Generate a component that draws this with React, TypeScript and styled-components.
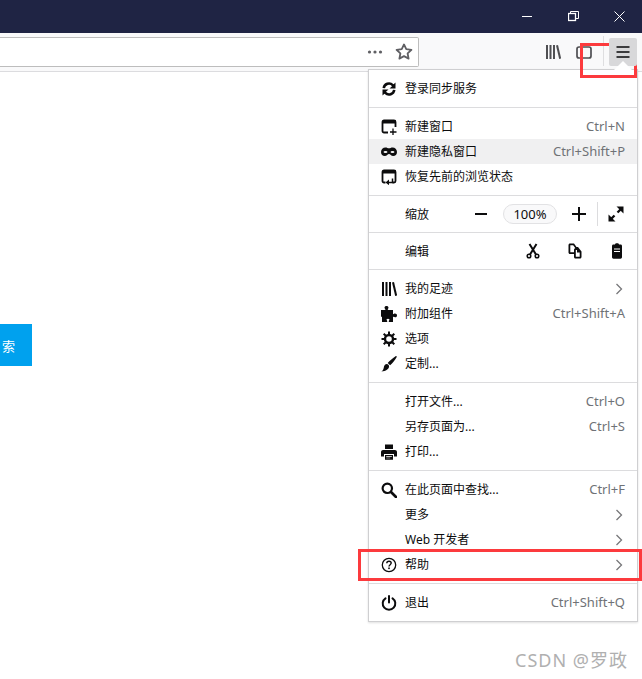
import React from 'react';
import styled, { createGlobalStyle } from 'styled-components';

const GlobalStyle = createGlobalStyle`
    html, body {
        margin: 0;
        padding: 0;
        background: #fff;
    }
    body {
        font-family: 'Noto Sans', 'Noto Sans CJK SC', sans-serif;
    }
`;

const Page = styled.div`
    position: relative;
    width: 642px;
    height: 679px;
    overflow: hidden;
    background: #fff;
`;

const TitleBar = styled.div`
    height: 33px;
    background: #1f2444;
    display: flex;
    justify-content: flex-end;
    align-items: center;
`;

const WindowButton = styled.div`
    width: 46px;
    height: 33px;
    display: flex;
    align-items: center;
    justify-content: center;
    color: #fff;
`;

const Toolbar = styled.div`
    height: 38px;
    background: #f9f9fa;
    border-bottom: 1px solid #dcdcdf;
    display: flex;
    align-items: flex-start;
`;

const AddressBar = styled.div`
    width: 419px;
    height: 30px;
    margin-top: 4px;
    box-sizing: border-box;
    background: #fff;
    border: 1px solid #bdbdbd;
    border-left: none;
    border-radius: 0 2px 2px 0;
    display: flex;
    justify-content: flex-end;
    align-items: center;
    gap: 12px;
    padding-right: 5px;
    color: #5f5f63;
`;

const ToolButtons = styled.div`
    flex: 1;
    display: flex;
    align-items: flex-start;
    padding-left: 126px;
    color: #4f4f52;
`;

const ToolIcon = styled.div<{ $gap: number }>`
    width: 16px;
    height: 16px;
    margin-top: 11px;
    margin-right: ${(p) => p.$gap}px;
`;

const ToolDivider = styled.div`
    width: 1px;
    height: 30px;
    margin-top: 3px;
    background: #dedee0;
`;

const MenuToggle = styled.div`
    position: relative;
    z-index: 2;
    width: 28px;
    height: 28px;
    margin-top: 5px;
    margin-left: 5px;
    border-radius: 2px;
    background: #d8d8da;
    display: flex;
    align-items: center;
    justify-content: center;
    color: #3c3c3e;
`;

const PageBody = styled.div`
    padding-top: 252px;
`;

const SearchButton = styled.div`
    width: 32px;
    height: 42px;
    background: #00a1ee;
    color: #fff;
    font-size: 13px;
    display: flex;
    align-items: center;
    padding-left: 2px;
    box-sizing: border-box;
`;

const Menu = styled.div`
    position: absolute;
    left: 368px;
    top: 69px;
    width: 270px;
    box-sizing: border-box;
    background: #fff;
    border: 1px solid #cfcfd1;
    box-shadow: 0 1px 2px rgba(0, 0, 0, 0.12);
    color: #0c0c0d;
    font-size: 12px;
`;

const MenuArrow = styled.div`
    position: absolute;
    z-index: 3;
    right: 5px;
    top: -9px;
    width: 0;
    height: 0;
    border-left: 9px solid transparent;
    border-right: 9px solid transparent;
    border-bottom: 9px solid #fff;
`;

const Section = styled.div<{ $bare?: boolean; $first?: boolean }>`
    padding: ${(p) => (p.$bare ? '0' : '6px 0')};
    border-top: ${(p) => (p.$first ? 'none' : '1px solid #dcdcde')};
`;

const Row = styled.div<{ $active?: boolean }>`
    height: 25px;
    display: flex;
    align-items: center;
    padding: 0 12px;
    background: ${(p) => (p.$active ? '#f0f0f1' : 'transparent')};
`;

const IconSlot = styled.div`
    width: 16px;
    height: 16px;
    margin-right: 8px;
    flex: none;
    color: #0c0c0d;
`;

const Label = styled.span`
    flex: 1;
    padding-bottom: 2px;
    white-space: nowrap;
`;

const Shortcut = styled.span`
    color: #6f7276;
    font-size: 13px;
    padding-bottom: 2px;
    white-space: nowrap;
`;

const Chevron = styled.div`
    width: 16px;
    height: 16px;
    color: #77777a;
    margin-right: -2px;
`;

const ControlRow = styled.div`
    height: 36px;
    display: flex;
    align-items: center;
    padding-left: 36px;
`;

const ControlLabel = styled.span<{ $width: number }>`
    width: ${(p) => p.$width}px;
`;

const ControlIcon = styled.div<{ $gap?: number }>`
    width: 16px;
    height: 16px;
    margin-right: ${(p) => p.$gap ?? 0}px;
    color: #0c0c0d;
`;

const ZoomValue = styled.div`
    width: 54px;
    height: 20px;
    margin: 0 14px;
    box-sizing: border-box;
    border: 1px solid #e2e2e4;
    border-radius: 10px;
    background: #f9f9fa;
    display: flex;
    align-items: center;
    justify-content: center;
    font-size: 13px;
`;

const ZoomDivider = styled.div`
    width: 1px;
    height: 24px;
    margin: 0 10px;
    background: #dcdcde;
`;

const Annotation = styled.div<{ $x: number; $y: number; $w: number; $h: number }>`
    position: absolute;
    z-index: 1;
    left: ${(p) => p.$x}px;
    top: ${(p) => p.$y}px;
    width: ${(p) => p.$w}px;
    height: ${(p) => p.$h}px;
    box-sizing: border-box;
    border: 3px solid #fc3a3d;
`;

const Watermark = styled.div`
    position: absolute;
    right: 14px;
    bottom: 7px;
    font-size: 18px;
    line-height: 24px;
    letter-spacing: 1px;
    color: #b0b0b0;
`;

const Svg = ({ children, size = 16 }: { children: React.ReactNode; size?: number }) => (
    <svg width={size} height={size} viewBox="0 0 16 16" fill="currentColor" style={{ display: 'block' }}>
        {children}
    </svg>
);

const line = { fill: 'none', stroke: 'currentColor', strokeWidth: 2 };

const icons: Record<string, React.ReactNode> = {
    sync: (
        <>
            <path d="M1.5 7A6.500 6.500 0 0 1 12.600 3.200L14.500 1.500V7.500H8.500L11 5.200A4 4 0 0 0 4 7.200z" />
            <path d="M14.500 9A6.500 6.500 0 0 1 3.400 12.800L1.500 14.500V8.500H7.500L5 10.800A4 4 0 0 0 12 8.800z" />
        </>
    ),
    newWindow: (
        <>
            <path d="M7 13.500H3A1.500 1.500 0 0 1 1.500 12V3A1.500 1.500 0 0 1 3 1.500h10A1.500 1.500 0 0 1 14.500 3V8" {...line} strokeWidth={1.8} />
            <rect x="1" y="1.500" width="14" height="3" rx="1" />
            <path d="M12 9.500v6.500M9 13h6.500" {...line} strokeWidth={1.3} />
        </>
    ),
    mask: (
        <path
            fillRule="evenodd"
            d="M4.500 3.500C2 3.500 0 5.500 0 8s1.600 4 3.800 4c2.200 0 2.800-2 4.200-2s2 2 4.200 2C14.400 12 16 10.500 16 8s-2-4.500-4.500-4.500c-1.500 0-2.300.8-3.500.8s-2-.8-3.500-.8zM4.500 7c1 0 1.900.4 1.900 1s-.9 1-1.900 1-1.900-.4-1.900-1 .9-1 1.900-1zm7 0c1 0 1.900.4 1.900 1s-.9 1-1.900 1-1.900-.4-1.900-1 .9-1 1.900-1z"
        />
    ),
    restore: (
        <>
            <path d="M4.500 13.500H3A1.500 1.500 0 0 1 1.500 12V3A1.500 1.500 0 0 1 3 1.500h10A1.500 1.500 0 0 1 14.500 3V12a1.500 1.500 0 0 1-1.500 1.500h-1.500" {...line} strokeWidth={1.8} />
            <rect x="1" y="1.500" width="14" height="3" rx="1" />
            <path d="M11.500 9.500v4H7" {...line} strokeWidth={1.5} />
            <path d="M8 10.500l-3.500 3L8 16.200z" />
        </>
    ),
    library: (
        <>
            <rect x="1" y="1" width="2" height="14" />
            <rect x="4.500" y="1" width="2" height="14" />
            <rect x="8" y="1" width="2" height="14" />
            <path d="M11 1.500l2-.5L16.200 14.500l-2 .5z" />
        </>
    ),
    puzzle: (
        <path d="M0 4h3.600c.6 0 .8-.4.5-.9C3.700 2.500 3.500 2.100 3.500 1.700 3.500.7 4.400 0 5.500 0s2 .7 2 1.700c0 .4-.2.8-.6 1.400-.3.5-.1.9.5.9H12v3.600c0 .5.4.7.8.4.4-.4.8-.5 1.200-.5 1.100 0 2 .7 2 1.900s-.9 1.900-2 1.900c-.4 0-.8-.2-1.200-.5-.4-.3-.8-.1-.8.4V16H7.800v-.8c0-.6.3-.9.6-1.200.3-.4-.2-1.200-1.400-1.200s-1.700.8-1.400 1.200c.3.300.6.6.6 1.200v.8H1v-4.800c0-.5-.3-.8-.6-.5l-.4.300z" />
    ),
    gear: (
        <>
            <circle cx="8" cy="8" r="4" {...line} strokeWidth={2.4} />
            <path d="M8 0.500V3.500M8 12.500V15.500M0.500 8H3.500M12.500 8H15.500M2.700 2.700L4.800 4.800M11.200 11.200L13.300 13.300M13.300 2.700L11.200 4.800M4.800 11.200L2.700 13.300" {...line} />
        </>
    ),
    brush: (
        <>
            <path d="M15.500.3c.3.300.3.700.1 1-1.700 2.800-4.400 6.200-6.500 8L6.700 7.100C8.500 5 12 2.100 14.600.3c.3-.2.600-.3.900 0z" />
            <path d="M5.800 8c1.200 0 2.300 1 2.300 2.300C8.100 13 5 15.500.3 15.500c1.200-.8 2-1.700 2.400-3.600C3 9.500 4.200 8 5.800 8z" />
        </>
    ),
    printer: (
        <path
            fillRule="evenodd"
            d="M4 .5h8v4.500H4zM2 6h12c1 0 2 .8 2 2v4.500h-3V10H3v2.500H0V8c0-1.200 1-2 2-2zM4 11h8v4.800H4zm1.200 1.200v.8h5.600v-.8zm0 1.500v.6h4v-.6z"
        />
    ),
    search: (
        <>
            <circle cx="6.300" cy="6.300" r="4.700" {...line} strokeWidth={2.2} />
            <path d="M10 10l5 5" {...line} strokeWidth={2.6} strokeLinecap="round" />
        </>
    ),
    help: (
        <>
            <circle cx="8" cy="8" r="6.700" {...line} strokeWidth={1.3} />
            <path d="M5.800 6.200C5.800 5 6.800 4.300 8 4.300s2.200.7 2.200 1.800c0 1.600-2.200 1.600-2.200 3.400" {...line} strokeWidth={1.4} />
            <rect x="7.200" y="10.500" width="1.600" height="1.600" />
        </>
    ),
    power: (
        <>
            <path d="M4.500 3.300a6.300 6.300 0 1 0 7 0" {...line} strokeLinecap="round" />
            <path d="M8 1v6.500" {...line} strokeLinecap="round" />
        </>
    ),
    scissors: (
        <>
            <circle cx="4" cy="13" r="1.800" {...line} strokeWidth={1.5} />
            <circle cx="12" cy="13" r="1.800" {...line} strokeWidth={1.5} />
            <path d="M5 11.500L11.500 1M11 11.500L4.500 1" {...line} />
        </>
    ),
    copy: (
        <path
            fillRule="evenodd"
            d="M3 .5h4l2.500 3.500H11l3.500 4.500V14c0 .8-.7 1.500-1.500 1.500H8.500C7.700 15.500 7 14.800 7 14v-3H3c-.8 0-1.500-.7-1.500-1.500V2C1.500 1.200 2.200.5 3 .5zM3.300 2.300v6.900H7V7c0-1 .7-2 1.500-2h-.3L6.200 2.300zM8.800 7v6.700h3.900V9.500H10V7z"
        />
    ),
    paste: (
        <path
            fillRule="evenodd"
            d="M6 1.500C6 .8 6.800.3 8 .3s2 .5 2 1.200h1.500c1 0 1.500.7 1.500 1.500v11c0 1-.7 1.700-1.500 1.700h-7C3.700 15.700 3 15 3 14V3c0-.8.5-1.500 1.500-1.500zM5 5.500v1h6v-1zM5 8v1h6V8z"
        />
    ),
    expand: (
        <>
            <path d="M9.500 6.500L13.500 2.500M6.500 9.500L2.500 13.500" {...line} strokeWidth={2.3} />
            <path d="M8.500.5h7v7l-2.300-2.300-2.400-2.400zM7.500 15.500h-7v-7l2.300 2.300 2.400 2.400z" />
        </>
    ),
    minus: <rect x="2" y="7" width="12" height="2" />,
    plus: <path d="M7 1h2v6h6v2H9v6H7V9H1V7h6z" />,
    chevron: <path d="M5.500 3L10.500 8 5.500 13" fill="none" stroke="currentColor" strokeWidth={1.3} />,
    star: (
        <path
            d="M8 1.300l2 4.200 4.600.6-3.400 3.200.9 4.600L8 11.700l-4.100 2.200.9-4.600-3.400-3.200 4.600-.6z"
            fill="none"
            stroke="currentColor"
            strokeWidth={1.6}
            strokeLinejoin="round"
        />
    ),
    dots: (
        <>
            <circle cx="2.500" cy="8" r="1.600" />
            <circle cx="8" cy="8" r="1.600" />
            <circle cx="13.500" cy="8" r="1.600" />
        </>
    ),
    sidebar: (
        <>
            <rect x="1" y="3" width="14" height="11" rx="2" {...line} strokeWidth={1.7} />
            <rect x="5" y="3" width="1.500" height="11" />
        </>
    ),
    hamburger: (
        <>
            <rect x="1.500" y="2" width="13" height="2" />
            <rect x="1.500" y="7" width="13" height="2" />
            <rect x="1.500" y="12" width="13" height="2" />
        </>
    ),
};

type Item = {
    label: string;
    icon?: string;
    shortcut?: string;
    more?: boolean;
    active?: boolean;
};

const MenuRow = ({ item }: { item: Item }) => (
    <Row $active={item.active}>
        <IconSlot>{item.icon && <Svg>{icons[item.icon]}</Svg>}</IconSlot>
        <Label>{item.label}</Label>
        {item.shortcut && <Shortcut>{item.shortcut}</Shortcut>}
        {item.more && (
            <Chevron>
                <Svg>{icons.chevron}</Svg>
            </Chevron>
        )}
    </Row>
);

const App = () => (
    <Page>
        <GlobalStyle />
        <TitleBar>
            <WindowButton>
                <svg width="11" height="11" viewBox="0 0 11 11" stroke="currentColor" fill="none">
                    <path d="M0 5.500h10" />
                </svg>
            </WindowButton>
            <WindowButton>
                <svg width="11" height="11" viewBox="0 0 11 11" stroke="currentColor" fill="none">
                    <rect x="0.500" y="2.500" width="7" height="7" strokeWidth={1.3} />
                    <path d="M2.500 2.500V.5h8v7H8" />
                </svg>
            </WindowButton>
            <WindowButton>
                <svg width="11" height="11" viewBox="0 0 11 11" stroke="currentColor" fill="none">
                    <path d="M.5.500l10 10M10.500.500l-10 10" />
                </svg>
            </WindowButton>
        </TitleBar>
        <Toolbar>
            <AddressBar>
                <Svg>{icons.dots}</Svg>
                <Svg size={18}>{icons.star}</Svg>
            </AddressBar>
            <ToolButtons>
                <ToolIcon $gap={15}>
                    <Svg>{icons.library}</Svg>
                </ToolIcon>
                <ToolIcon $gap={11}>
                    <Svg>{icons.sidebar}</Svg>
                </ToolIcon>
                <ToolDivider />
                <MenuToggle>
                    <Svg>{icons.hamburger}</Svg>
                </MenuToggle>
            </ToolButtons>
        </Toolbar>
        <PageBody>
            <SearchButton>索</SearchButton>
        </PageBody>

        <Menu>
            <MenuArrow />
            <Section $first>
                <MenuRow item={{ label: '登录同步服务', icon: 'sync' }} />
            </Section>
            <Section>
                <MenuRow item={{ label: '新建窗口', icon: 'newWindow', shortcut: 'Ctrl+N' }} />
                <MenuRow item={{ label: '新建隐私窗口', icon: 'mask', shortcut: 'Ctrl+Shift+P', active: true }} />
                <MenuRow item={{ label: '恢复先前的浏览状态', icon: 'restore' }} />
            </Section>
            <Section $bare>
                <ControlRow>
                    <ControlLabel $width={68}>缩放</ControlLabel>
                    <ControlIcon>
                        <Svg>{icons.minus}</Svg>
                    </ControlIcon>
                    <ZoomValue>100%</ZoomValue>
                    <ControlIcon>
                        <Svg>{icons.plus}</Svg>
                    </ControlIcon>
                    <ZoomDivider />
                    <ControlIcon>
                        <Svg>{icons.expand}</Svg>
                    </ControlIcon>
                </ControlRow>
            </Section>
            <Section $bare>
                <ControlRow>
                    <ControlLabel $width={120}>编辑</ControlLabel>
                    <ControlIcon $gap={26}>
                        <Svg>{icons.scissors}</Svg>
                    </ControlIcon>
                    <ControlIcon $gap={26}>
                        <Svg>{icons.copy}</Svg>
                    </ControlIcon>
                    <ControlIcon>
                        <Svg>{icons.paste}</Svg>
                    </ControlIcon>
                </ControlRow>
            </Section>
            <Section>
                <MenuRow item={{ label: '我的足迹', icon: 'library', more: true }} />
                <MenuRow item={{ label: '附加组件', icon: 'puzzle', shortcut: 'Ctrl+Shift+A' }} />
                <MenuRow item={{ label: '选项', icon: 'gear' }} />
                <MenuRow item={{ label: '定制...', icon: 'brush' }} />
            </Section>
            <Section>
                <MenuRow item={{ label: '打开文件...', shortcut: 'Ctrl+O' }} />
                <MenuRow item={{ label: '另存页面为...', shortcut: 'Ctrl+S' }} />
                <MenuRow item={{ label: '打印...', icon: 'printer' }} />
            </Section>
            <Section>
                <MenuRow item={{ label: '在此页面中查找...', icon: 'search', shortcut: 'Ctrl+F' }} />
                <MenuRow item={{ label: '更多', more: true }} />
                <MenuRow item={{ label: 'Web 开发者', more: true }} />
                <MenuRow item={{ label: '帮助', icon: 'help', more: true }} />
            </Section>
            <Section>
                <MenuRow item={{ label: '退出', icon: 'power', shortcut: 'Ctrl+Shift+Q' }} />
            </Section>
        </Menu>

        <Annotation $x={580} $y={43} $w={57} $h={35} />
        <Annotation $x={358} $y={549} $w={284} $h={32} />
        <Watermark>CSDN @罗政</Watermark>
    </Page>
);

export default App;
